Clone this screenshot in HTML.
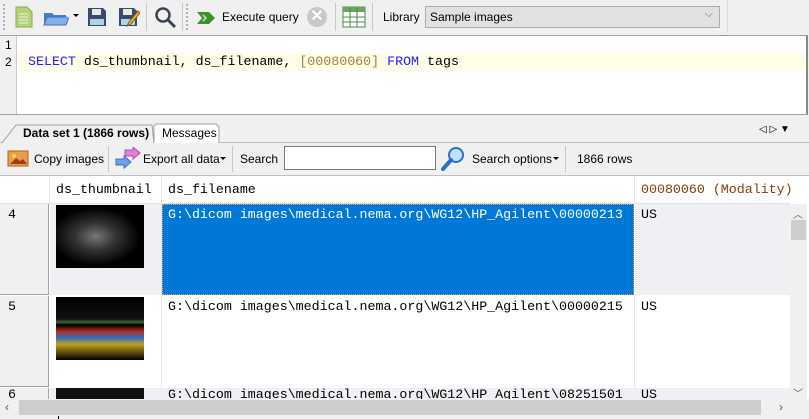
<!DOCTYPE html>
<html><head><style>
*{margin:0;padding:0;box-sizing:border-box}
body{width:809px;height:419px;overflow:hidden;background:#f0f0f0;font-family:"Liberation Sans",sans-serif;font-size:12px;color:#000;position:relative}
.a{position:absolute}
.mono{font-family:"Liberation Mono",monospace;font-size:13.3px;white-space:pre}
.sep{position:absolute;width:1px;background:#c8c8c8}
.grip{position:absolute;width:2px;border-left:2px dotted #b0b0b0}
.cell{position:absolute;border-right:1px solid #e4e4e4;border-bottom:1px solid #e4e4e4}
</style></head><body>
<!-- toolbar -->
<div class="grip" style="left:3px;top:4px;height:26px"></div>
<svg class="a" style="left:14px;top:6px" width="20" height="22"><path d="M2 1h11l5 5v15H2z" fill="#b5d37a" stroke="#8aa84e"/><path d="M5 8h9M5 11h9M5 14h9M5 17h9" stroke="#e8f3d0"/></svg>
<svg class="a" style="left:43px;top:8px" width="28" height="18"><path d="M1 5h8l2 2h12v10H1z" fill="#4a7ec8"/><path d="M4 9h22l-3 8H1z" fill="#7fb0ec" stroke="#3f6fb5"/><path d="M24 8l3 2" stroke="#fff"/></svg>
<div class="a" style="left:73px;top:14px;border:3px solid transparent;border-top:3px solid #000;width:0"></div>
<svg class="a" style="left:87px;top:7px" width="20" height="20"><path d="M1 1h15l3 3v15H1z" fill="#3a4a6a"/><rect x="5" y="2" width="9" height="6" fill="#e8e8e8"/><rect x="3" y="12" width="14" height="6" fill="#a8d6e8"/></svg>
<svg class="a" style="left:118px;top:7px" width="22" height="22"><path d="M1 1h15l3 3v15H1z" fill="#3a4a6a"/><rect x="5" y="2" width="9" height="6" fill="#e8e8e8"/><rect x="3" y="12" width="14" height="6" fill="#a8d6e8"/><path d="M20 4l-9 11-2 4 4-2 9-11z" fill="#f2b233" stroke="#8a5a10"/></svg>
<div class="sep" style="left:146px;top:3px;height:28px"></div>
<svg class="a" style="left:154px;top:6px" width="24" height="24"><circle cx="9" cy="9" r="6.5" fill="none" stroke="#3a4658" stroke-width="2.5"/><path d="M14 14l7 7" stroke="#3a4658" stroke-width="3"/></svg>
<div class="sep" style="left:182px;top:3px;height:28px"></div>
<div class="grip" style="left:186px;top:4px;height:26px"></div>
<svg class="a" style="left:196px;top:10px" width="20" height="16"><path d="M1 2h12l6 6-6 6H1l5-6z" fill="#3f8f2f"/><path d="M7 5l3 3-3 3" stroke="#c9e8b8" fill="none" stroke-width="1.5"/></svg>
<div class="a" style="left:222px;top:10px;font-size:12px">Execute query</div>
<div class="a" style="left:307px;top:7px;width:20px;height:20px;border-radius:50%;background:#c8c8c8;color:#fff;font-size:16px;font-weight:bold;text-align:center;line-height:20px">✕</div>
<div class="sep" style="left:335px;top:3px;height:28px"></div>
<svg class="a" style="left:342px;top:6px" width="24" height="22"><rect x="1" y="1" width="22" height="20" fill="#fff" stroke="#4f8a4a"/><rect x="1" y="1" width="22" height="5" fill="#6aa65f"/><path d="M1 11h22M1 16h22M8 1v20M15 1v20" stroke="#4f8a4a"/></svg>
<div class="sep" style="left:372px;top:3px;height:28px"></div>
<div class="a" style="left:383px;top:10px">Library</div>
<div class="a" style="left:425px;top:6px;width:295px;height:22px;background:#e1e1e1;border:1px solid #adadad;padding:3px 4px">Sample images<span class="a" style="right:6px;top:1px;color:#666;font-size:11px">⌵</span></div>
<div class="sep" style="left:727px;top:0;height:33px;background:#dadada"></div>
<!-- editor -->
<div class="a" style="left:0;top:35px;width:808px;height:80px;background:#fff;border-top:1px solid #a0a0a0;border-bottom:1px solid #a0a0a0;border-right:2px solid #888"></div>
<div class="a" style="left:0;top:36px;width:17px;height:78px;background:#f0f0f0;border-right:1px solid #ccc"></div>
<div class="a" style="left:18px;top:53px;width:787px;height:18px;background:#fffde8"></div>
<div class="a" style="left:5px;top:38px;font-size:12px">1</div>
<div class="a" style="left:5px;top:55px;font-size:12px">2</div>
<div class="a mono" style="left:28px;top:54px"><span style="color:#2020ff">SELECT</span> ds_thumbnail, ds_filename, <span style="color:#a08040">[00080060]</span> <span style="color:#2020ff">FROM</span> tags</div>
<!-- tabs -->
<div class="a" style="left:0;top:142px;width:809px;height:1px;background:#c0c0c0"></div>
<svg class="a" style="left:0;top:123px" width="230" height="21"><path d="M2 20L16 2h136l2 18" fill="#f0f0f0" stroke="#a0a0a0"/><path d="M154 20V3l2-2h60l3 3v16" fill="#fff" stroke="#a0a0a0"/></svg>
<div class="a" style="left:23px;top:126px;font-weight:bold;font-size:12px">Data set 1 (1866 rows)</div>
<div class="a" style="left:162px;top:126px;font-size:12px">Messages</div>
<div class="a" style="left:759px;top:124px;font-size:10px">◁ ▷ <span style="font-size:10px">▼</span></div>
<!-- toolbar 2 -->
<svg class="a" style="left:7px;top:149px" width="22" height="18"><rect x="1" y="2" width="20" height="15" fill="#e8a050" stroke="#b06020"/><path d="M3 15l6-6 4 3 3-2 4 5z" fill="#a04010"/><circle cx="7" cy="7" r="2" fill="#ffd040"/></svg>
<div class="a" style="left:34px;top:152px">Copy images</div>
<div class="sep" style="left:108px;top:146px;height:26px"></div>
<svg class="a" style="left:115px;top:147px" width="26" height="24"><path d="M10 3h8V0l7 6-7 6V9h-8z" fill="#e080d8" stroke="#b050a8"/><path d="M1 12h8V9l7 6-7 6v-3H1z" fill="#70a0e8" stroke="#4070c0"/></svg>
<div class="a" style="left:143px;top:152px">Export all data</div>
<div class="a" style="left:220px;top:157px;border:3px solid transparent;border-top:3px solid #000;width:0"></div>
<div class="sep" style="left:232px;top:146px;height:26px"></div>
<div class="a" style="left:240px;top:152px">Search</div>
<div class="a" style="left:284px;top:146px;width:152px;height:24px;background:#fff;border:1px solid #7a7a7a"></div>
<svg class="a" style="left:440px;top:146px" width="26" height="26"><circle cx="16" cy="9" r="7" fill="#bfe0ff" stroke="#2a70c8" stroke-width="2"/><path d="M11 14l-8 9" stroke="#2a70c8" stroke-width="4" stroke-linecap="round"/></svg>
<div class="a" style="left:472px;top:152px">Search options</div>
<div class="a" style="left:553px;top:157px;border:3px solid transparent;border-top:3px solid #000;width:0"></div>
<div class="sep" style="left:565px;top:146px;height:26px"></div>
<div class="a" style="left:577px;top:152px">1866 rows</div>
<div class="a" style="left:0;top:175px;width:809px;height:1px;background:#c0c0c0"></div>
<!-- grid -->
<div class="a" style="left:0;top:176px;width:809px;height:223px;background:#fff"></div>
<div class="a" style="left:0;top:176px;width:790px;height:28px;background:#fff;border-bottom:1px solid #e4e4e4"></div>
<div class="a" style="left:49px;top:176px;width:1px;height:28px;background:#e4e4e4"></div>
<div class="a" style="left:161px;top:176px;width:1px;height:28px;background:#e4e4e4"></div>
<div class="a" style="left:634px;top:176px;width:1px;height:28px;background:#e4e4e4"></div>
<div class="a mono" style="left:56px;top:182px">ds_thumbnail</div>
<div class="a mono" style="left:168px;top:182px">ds_filename</div>
<div class="a mono" style="left:641px;top:182px;color:#804000">00080060 (Modality)</div>
<!-- row 4 -->
<div class="a" style="left:0;top:204px;width:49px;height:91px;background:#f0f0f0;border-right:1px solid #a0a0a0;border-bottom:1px solid #a0a0a0"></div>
<div class="a" style="left:50px;top:204px;width:112px;height:91px;background:#efeff4;border-right:1px solid #e4e4e4"></div>
<div class="a" style="left:162px;top:204px;width:472px;height:91px;background:#0078d7;border:1px dotted #f0a040"></div>
<div class="a" style="left:635px;top:204px;width:155px;height:91px;background:#efeff4"></div>
<div class="a mono" style="left:8px;top:207px">4</div>
<div class="a" style="left:56px;top:205px;width:88px;height:63px;background:radial-gradient(ellipse at 45% 50%,#777 0,#333 30%,#000 65%)"></div>
<div class="a mono" style="left:168px;top:207px;color:#fff">G:\dicom images\medical.nema.org\WG12\HP_Agilent\00000213</div>
<div class="a mono" style="left:641px;top:207px">US</div>
<!-- row 5 -->
<div class="a" style="left:0;top:296px;width:49px;height:91px;background:#f0f0f0;border-right:1px solid #a0a0a0;border-bottom:1px solid #a0a0a0"></div>
<div class="a" style="left:161px;top:296px;width:1px;height:91px;background:#e4e4e4"></div>
<div class="a" style="left:634px;top:296px;width:1px;height:91px;background:#e4e4e4"></div>
<div class="a mono" style="left:8px;top:299px">5</div>
<div class="a" style="left:56px;top:297px;width:88px;height:63px;background:linear-gradient(#000 0,#111 35%,#3a6a3a 40%,#000 44%,#b03020 55%,#3070c0 65%,#c0a020 75%,#000 100%)"></div>
<div class="a mono" style="left:168px;top:299px">G:\dicom images\medical.nema.org\WG12\HP_Agilent\00000215</div>
<div class="a mono" style="left:641px;top:299px">US</div>
<!-- row 6 -->
<div class="a" style="left:0;top:388px;width:49px;height:11px;background:#f0f0f0;border-right:1px solid #a0a0a0"></div>
<div class="a" style="left:50px;top:388px;width:740px;height:11px;background:#efeff4"></div>
<div class="a" style="left:56px;top:388px;width:88px;height:11px;background:#111"></div>
<div class="a" style="left:0;top:388px;width:790px;height:11px;overflow:hidden"><div class="a mono" style="left:8px;top:-1px">6</div><div class="a mono" style="left:168px;top:-1px">G:\dicom images\medical.nema.org\WG12\HP_Agilent\08251501</div><div class="a mono" style="left:641px;top:-1px">US</div></div>
<!-- vscroll -->
<div class="a" style="left:790px;top:204px;width:17px;height:195px;background:#f0f0f0"></div>
<div class="a" style="left:793px;top:206px;font-size:10px;color:#555">︿</div>
<div class="a" style="left:791px;top:220px;width:15px;height:20px;background:#cdcdcd"></div>
<div class="a" style="left:793px;top:385px;font-size:10px;color:#555">﹀</div>
<!-- hscroll -->
<div class="a" style="left:0;top:399px;width:809px;height:17px;background:#f0f0f0"></div>
<div class="a" style="left:5px;top:400px;font-size:12px;color:#555">‹</div>
<div class="a" style="left:19px;top:400px;width:742px;height:15px;background:#cdcdcd"></div>
<div class="a" style="left:779px;top:400px;font-size:12px;color:#555">›</div>
<div class="a" style="left:58px;top:416px;width:1px;height:3px;background:#000"></div>
</body></html>
